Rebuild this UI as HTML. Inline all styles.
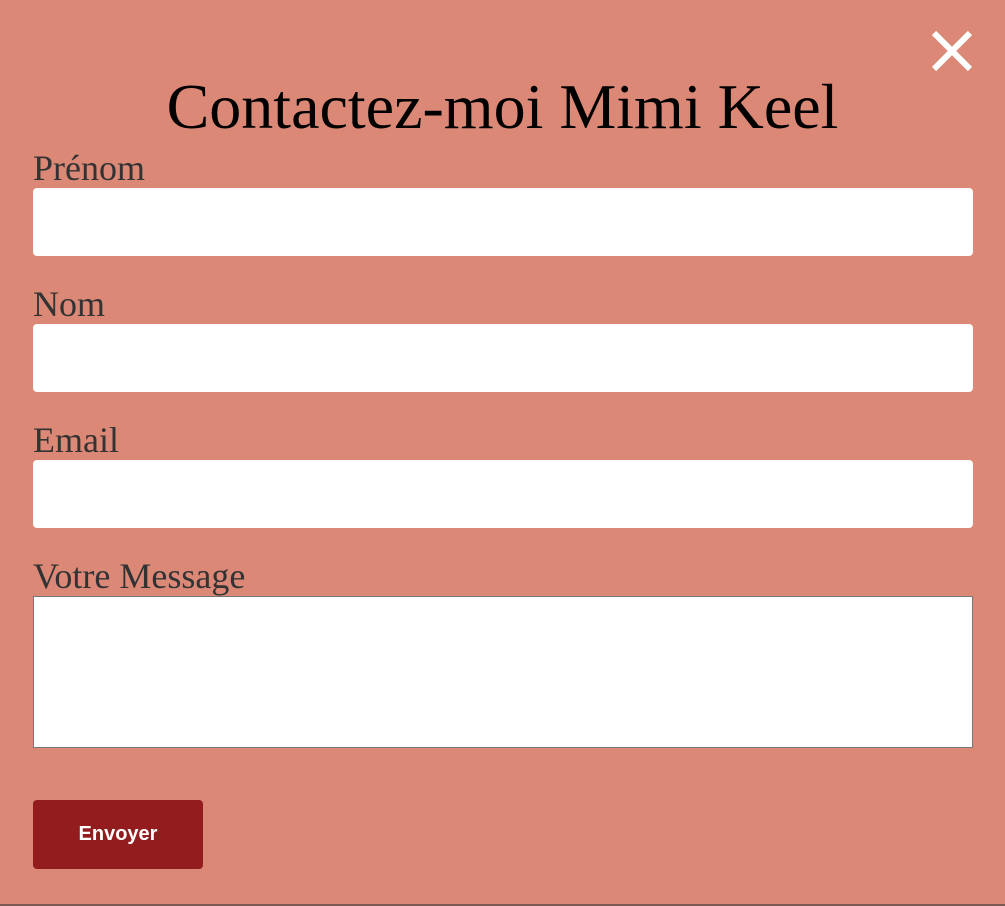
<!DOCTYPE html>
<html><head><style>
html,body{margin:0;padding:0;}
body{width:1005px;height:906px;background:#db8877;position:relative;overflow:hidden;font-family:"Liberation Serif",serif;}
h1{position:absolute;left:0;width:1005px;top:69px;margin:0;text-align:center;font-weight:normal;font-size:64px;line-height:76px;color:#000;}
.l{position:absolute;left:33px;font-size:36px;line-height:36px;color:#333;}
.i{position:absolute;left:33px;width:940px;height:68px;background:#fff;border-radius:4px;}
.ta{position:absolute;left:33px;top:596px;width:938px;height:150px;background:#fff;border:1px solid #767676;}
.btn{position:absolute;left:33px;top:800px;width:170px;height:69px;background:#921c1e;border-radius:4px;color:#fff;font:bold 20px "Liberation Sans",sans-serif;text-align:center;line-height:69px;}
.x{position:absolute;left:931px;top:30px;width:42px;height:42px;}
.bar{position:absolute;left:0;top:904px;width:1005px;height:2px;background:#7a5a52;}
</style></head><body>
<svg class="x" viewBox="0 0 42 42"><path d="M3 3L39 39M39 3L3 39" stroke="#fff" stroke-width="6"/></svg>
<h1>Contactez-moi Mimi Keel</h1>
<div class="l" style="top:150px">Prénom</div>
<div class="i" style="top:188px"></div>
<div class="l" style="top:286px">Nom</div>
<div class="i" style="top:324px"></div>
<div class="l" style="top:422px">Email</div>
<div class="i" style="top:460px"></div>
<div class="l" style="top:558px">Votre Message</div>
<div class="ta"></div>
<div class="btn">Envoyer</div>
<div class="bar"></div>
</body></html>
